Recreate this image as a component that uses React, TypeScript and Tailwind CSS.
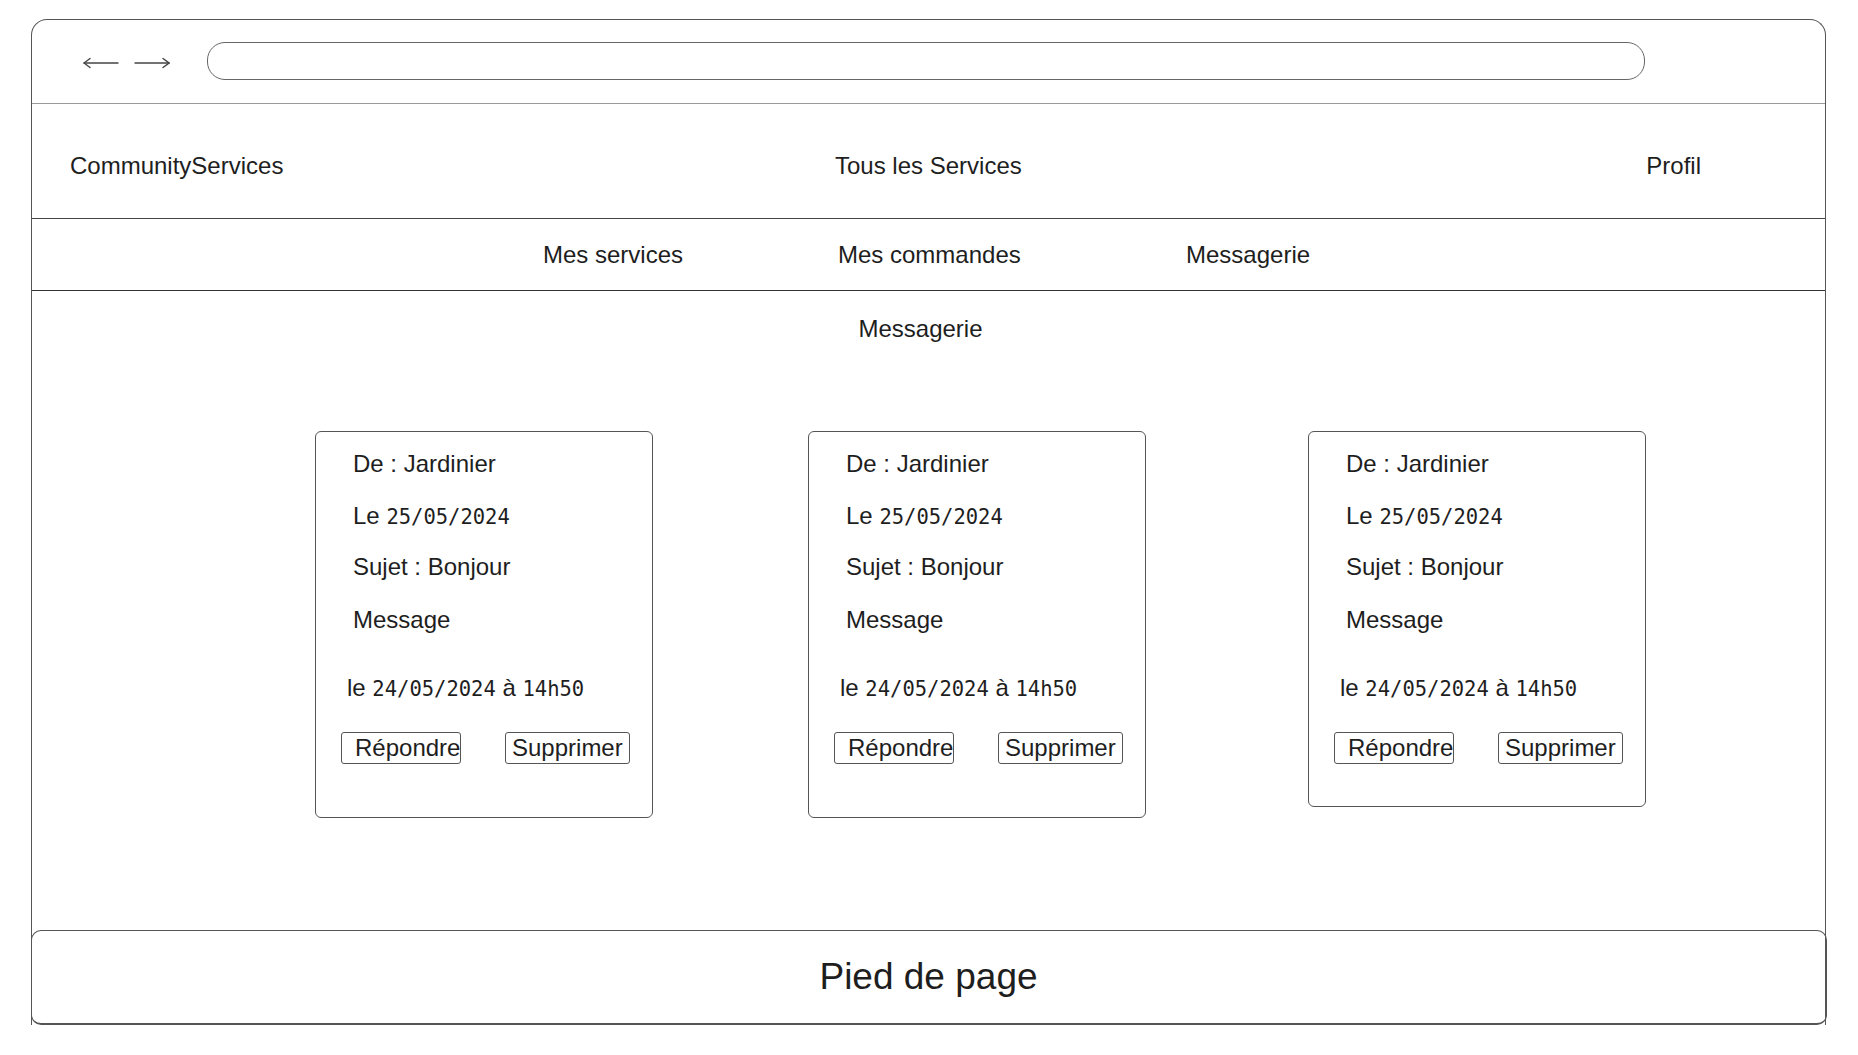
import React from 'react';

const Mono = ({ children }: { children: React.ReactNode }) => (
  <span className="font-['DejaVu_Sans_Mono',monospace] text-[20.5px]">{children}</span>
);

const MessageCard = ({ short }: { short?: boolean }) => (
  <div
    className={`flex w-[338px] flex-col rounded-[6px] border-[1.5px] border-[#555] pt-[18px] text-[24px] leading-[28px] text-[#1e1e1e] ${
      short ? 'h-[376px]' : 'h-[387px]'
    }`}
  >
    <div className="pl-[37px]">De : Jardinier</div>
    <div className="mt-[24px] pl-[37px]">
      Le <Mono>25/05/2024</Mono>
    </div>
    <div className="mt-[22px] pl-[37px]">Sujet : Bonjour</div>
    <div className="mt-[25px] pl-[37px]">Message</div>
    <div className="mt-[40px] pl-[31px]">
      le <Mono>24/05/2024</Mono> à <Mono>14h50</Mono>
    </div>
    <div className="mt-[29px] flex pl-[25px]">
      <button className="h-[32px] w-[120px] overflow-hidden whitespace-nowrap rounded-[3px] border-[1.5px] border-[#555] pl-[13px] text-left leading-[28px]">
        Répondre
      </button>
      <button className="ml-[44px] h-[32px] w-[125px] rounded-[3px] border-[1.5px] border-[#555] pl-[6px] text-left leading-[28px]">
        Supprimer
      </button>
    </div>
  </div>
);

const Arrow = ({ dir }: { dir: 'left' | 'right' }) => (
  <svg width="36" height="12" viewBox="0 0 36 12" fill="none" stroke="#444" strokeWidth="1.4" strokeLinecap="round">
    {dir === 'left' ? (
      <>
        <line x1="1" y1="6" x2="35" y2="6" />
        <polyline points="7,1.5 1,6 7,10.5" />
      </>
    ) : (
      <>
        <line x1="1" y1="6" x2="35" y2="6" />
        <polyline points="29,1.5 35,6 29,10.5" />
      </>
    )}
  </svg>
);

const App = () => {
  return (
    <div className="h-[1055px] w-[1858px] bg-white pt-[19px] font-['Liberation_Sans',Arial,sans-serif] text-[#1e1e1e]">
      <div className="ml-[31px] flex h-[1006px] w-[1795px] flex-col rounded-t-[16px] border-x-[1.5px] border-t-[1.5px] border-[#555]">
        {/* browser bar */}
        <div className="flex h-[84px] items-center border-b-[1.5px] border-[#999]">
          <div className="ml-[51px] flex gap-[15px] pt-[2px]">
            <Arrow dir="left" />
            <Arrow dir="right" />
          </div>
          <div className="-mt-[2px] ml-[37px] h-[38px] w-[1438px] rounded-[18px] border-[1.5px] border-[#666]" />
        </div>

        {/* top nav */}
        <div className="flex h-[115px] items-center border-b-[1.5px] border-[#444] pt-[9px] text-[24px]">
          <div className="w-[803px] pl-[38px]">CommunityServices</div>
          <div>Tous les Services</div>
          <div className="ml-auto pr-[124px]">Profil</div>
        </div>

        {/* sub nav */}
        <div className="flex h-[72px] items-center border-b-[1.5px] border-[#333] pl-[511px] text-[24px]">
          <div className="w-[295px]">Mes services</div>
          <div className="w-[348px]">Mes commandes</div>
          <div>Messagerie</div>
        </div>

        {/* content */}
        <div className="flex flex-1 flex-col">
          <div className="mt-[24px] pr-[16px] text-center text-[24px] leading-[28px]">Messagerie</div>
          <div className="mt-[88px] flex items-start pl-[283px]">
            <MessageCard />
            <div className="ml-[155px]">
              <MessageCard />
            </div>
            <div className="ml-[162px]">
              <MessageCard short />
            </div>
          </div>
        </div>

        {/* footer */}
        <div className="-mx-[1.5px] flex h-[95px] items-center justify-center rounded-[10px] border-[1.5px] border-b-[2px] border-[#555] text-[37px]">
          Pied de page
        </div>
      </div>
    </div>
  );
};

export default App;
